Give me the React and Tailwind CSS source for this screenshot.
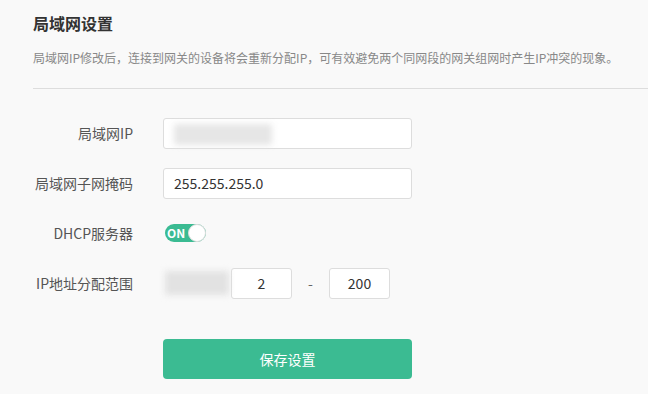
import React from 'react';

const Row = ({ label, children, className = '' }) => (
  <div className={`flex items-center h-[32px] ${className}`}>
    <label className="w-[133px] text-right text-[14px] text-[#555] mr-[30px]">{label}</label>
    {children}
  </div>
);

const App = () => {
  return (
    <div
      className="w-[648px] h-[394px] overflow-hidden bg-[#f9f9f9]"
      style={{ fontFamily: '"Microsoft YaHei", "Noto Sans CJK SC", sans-serif' }}
    >
      {/* header */}
      <div className="pl-[33px] pt-[12px]">
        <h1 className="text-[16px] leading-[22px] font-bold text-[#333]">局域网设置</h1>
        <p className="mt-[16px] text-[12px] leading-[16px] text-[#888] whitespace-nowrap">
          局域网IP修改后，连接到网关的设备将会重新分配IP，可有效避免两个同网段的网关组网时产生IP冲突的现象。
        </p>
        <div className="mt-[22px] h-px bg-[#ddd]" />
      </div>

      {/* form */}
      <div className="mt-[28px]">
        <Row label="局域网IP">
          <div className="relative w-[249px] h-[31px] bg-white border border-[#ddd] rounded-[3px]">
            <div className="absolute left-[10px] top-[5px] w-[98px] h-[21px] bg-[#e6e6e6] rounded-[2px] blur-[3px]" />
          </div>
        </Row>

        <Row label="局域网子网掩码" className="mt-[18px]">
          <input
            readOnly
            value="255.255.255.0"
            className="w-[249px] h-[31px] bg-white border border-[#ddd] rounded-[3px] px-[10px] text-[14px] text-[#333] outline-none"
          />
        </Row>

        <Row label="DHCP服务器" className="mt-[18px]">
          <div className="ml-[2px] relative w-[41px] h-[18px] rounded-full bg-[#3bbb92] flex items-center">
            <span className="pl-[2px] text-[12px] leading-none font-bold text-white">ON</span>
            <span className="absolute right-0 top-0 w-[18px] h-[18px] rounded-full bg-white border border-[#ddd]" />
          </div>
        </Row>

        <Row label="IP地址分配范围" className="mt-[18px]">
          <div className="relative w-[68px] h-[31px]">
            <div className="absolute left-[2px] top-[3px] w-[64px] h-[24px] bg-[#e2e2e2] blur-[3px]" />
          </div>
          <input
            readOnly
            value="2"
            className="w-[61px] h-[31px] bg-white border border-[#ddd] rounded-[3px] text-center text-[14px] text-[#333] outline-none"
          />
          <span className="w-[37px] text-center text-[14px] text-[#666]">-</span>
          <input
            readOnly
            value="200"
            className="w-[61px] h-[31px] bg-white border border-[#ddd] rounded-[3px] text-center text-[14px] text-[#333] outline-none"
          />
        </Row>

        <div className="mt-[40px] pl-[163px]">
          <button className="w-[249px] h-[40px] rounded-[4px] bg-[#3bbb92] text-white text-[14px]">
            保存设置
          </button>
        </div>
      </div>
    </div>
  );
};

export default App;
